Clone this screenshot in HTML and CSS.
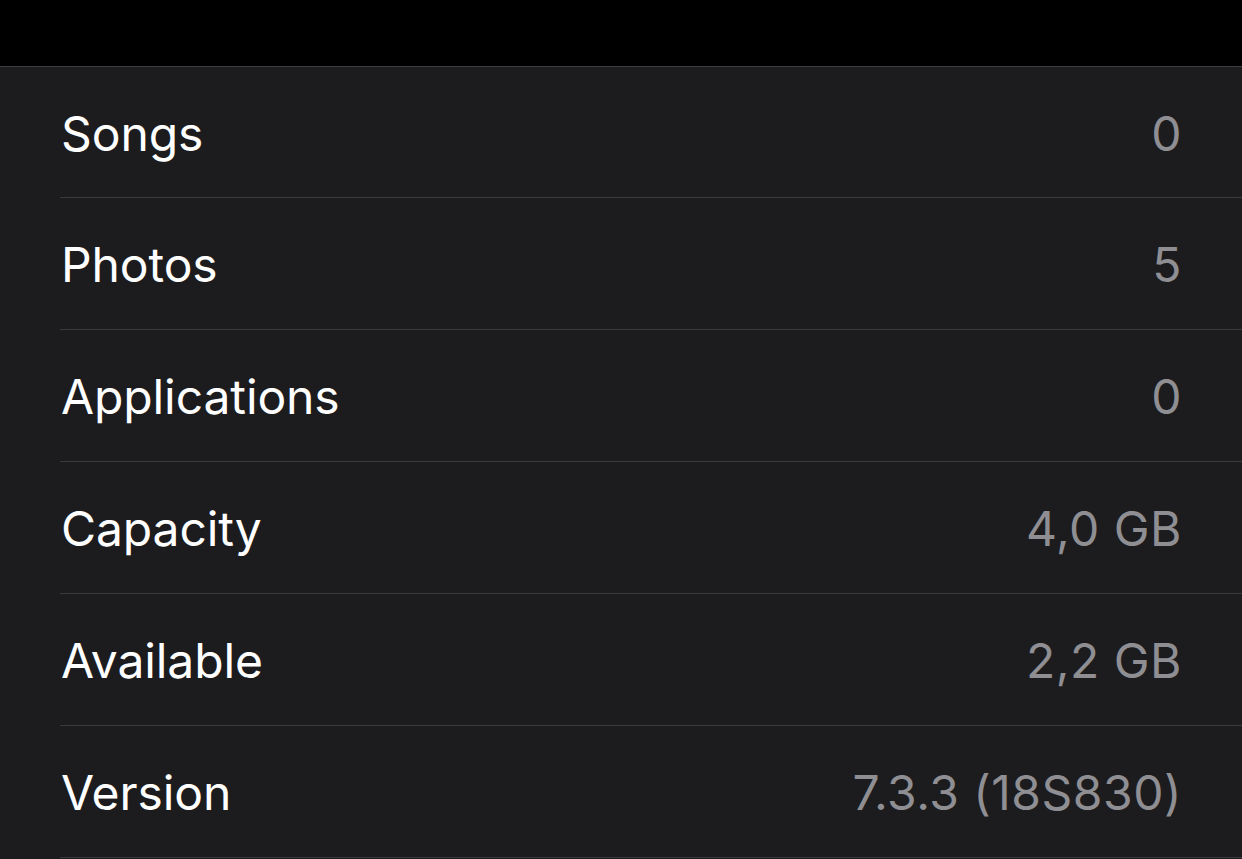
FILE: index.html
```html
<!DOCTYPE html>
<html>
<head>
<meta charset="utf-8">
<link rel="stylesheet" href="styles.css">
</head>
<body>
<div class="topbar"></div>
<div class="list">
  <div class="row"><span class="label">Songs</span><span class="value">0</span></div>
  <div class="row"><span class="label">Photos</span><span class="value">5</span></div>
  <div class="row"><span class="label">Applications</span><span class="value">0</span></div>
  <div class="row"><span class="label">Capacity</span><span class="value">4,0 GB</span></div>
  <div class="row"><span class="label">Available</span><span class="value">2,2 GB</span></div>
  <div class="row"><span class="label">Version</span><span class="value">7.3.3 (18S830)</span></div>
</div>
</body>
</html>
```
FILE: styles.css
```css
html, body {
  margin: 0;
  padding: 0;
  background: #1c1c1e;
  font-family: Inter, "Noto Sans", sans-serif;
  overflow: hidden;
}
.topbar {
  height: 66px;
  background: #000;
  border-bottom: 1px solid #3d3d40;
}
.list {
  padding-left: 60px;
  background: #1c1c1e;
}
.row {
  box-sizing: border-box;
  height: 132px;
  display: flex;
  align-items: center;
  justify-content: space-between;
  border-bottom: 1px solid #3a3a3c;
  padding: 2px 60px 0 1px;
}
.row:first-child {
  height: 131px;
}
.label {
  color: #ffffff;
  font-size: 48px;
  letter-spacing: -0.1px;
}
.value {
  color: #8e8e93;
  font-size: 48px;
  letter-spacing: 0.5px;
}
```
